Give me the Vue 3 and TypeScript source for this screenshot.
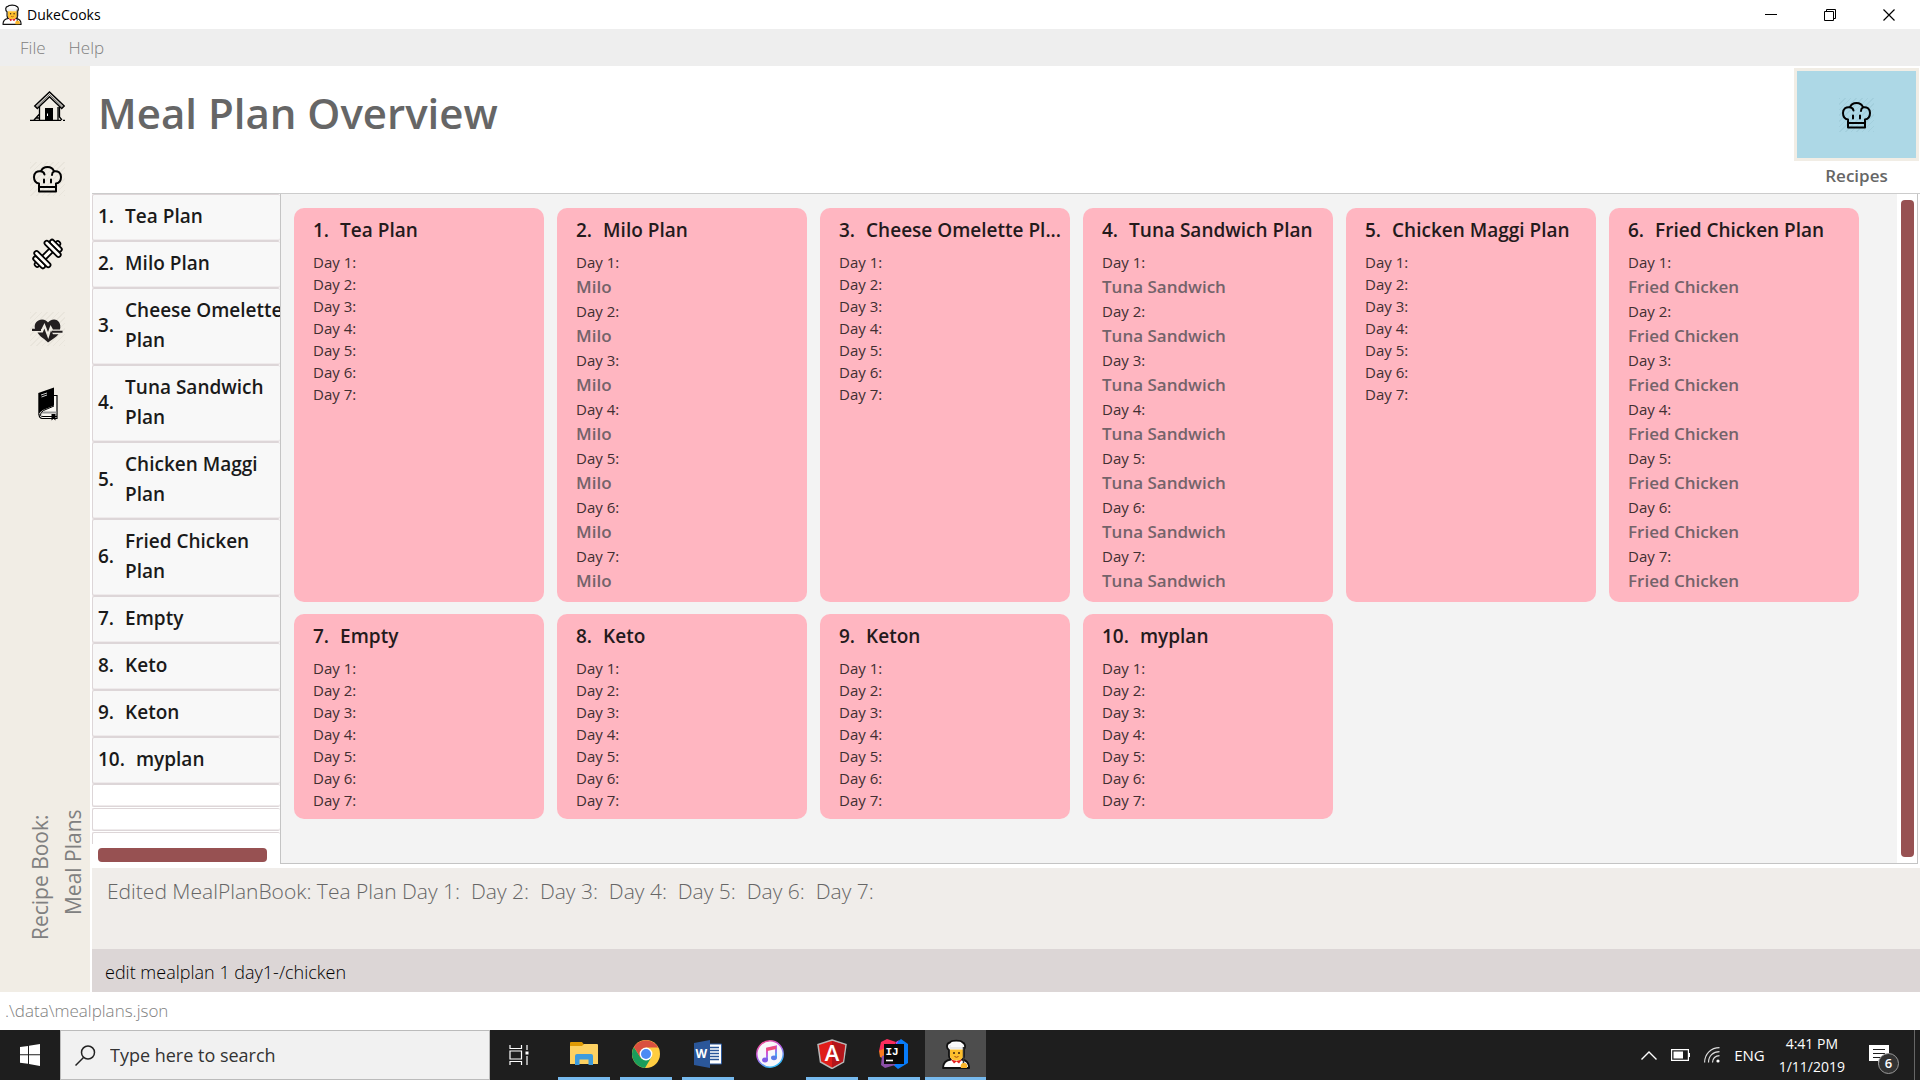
<script setup lang="ts">
import { ref } from 'vue'

interface Plan {
  id: number
  name: string
  cardName?: string
  meal?: string
}

const plans: Plan[] = [
  { id: 1, name: 'Tea Plan' },
  { id: 2, name: 'Milo Plan', meal: 'Milo' },
  { id: 3, name: 'Cheese Omelette Plan', cardName: 'Cheese Omelette Pl...' },
  { id: 4, name: 'Tuna Sandwich Plan', meal: 'Tuna Sandwich' },
  { id: 5, name: 'Chicken Maggi Plan' },
  { id: 6, name: 'Fried Chicken Plan', meal: 'Fried Chicken' },
  { id: 7, name: 'Empty' },
  { id: 8, name: 'Keto' },
  { id: 9, name: 'Keton' },
  { id: 10, name: 'myplan' },
]

const result = 'Edited MealPlanBook: Tea Plan Day 1:  Day 2:  Day 3:  Day 4:  Day 5:  Day 6:  Day 7: '
const command = ref('edit mealplan 1 day1-/chicken')
const search = ref('')
</script>

<template>
  <div class="desktop">
    <svg width="0" height="0" class="defs" aria-hidden="true">
      <symbol id="hat" viewBox="0 0 35 34">
        <g fill="none" stroke="#000" stroke-width="2" stroke-linejoin="round" stroke-linecap="round">
          <path d="M9 29.500V21.500C5.500 21 4 18 4 15C4 11 7 8.500 11 9.300C12 6.500 14.500 5 17.500 5C20.500 5 23 6.500 24 9.300C28 8.500 31 11 31 15C31 18 29.500 21 26 21.500V29.500Z" />
          <path d="M9 25H26M11 9.300C13 9.500 14 10.500 14.500 12.500M24 9.300C22.500 10 22 11 22 13M14 17.500V20.500M21 17.500V20.500" />
        </g>
      </symbol>
      <symbol id="cook" viewBox="0 0 28 30">
        <path d="M7 11C4 9 4.500 4 8 3.500C9.500 1 19 1 20.500 3.500C23 4 24 8 22 10.500V17C22 19 21 20 19.500 20.500C24 21 27 23.500 27.200 29H1C1.200 23.500 4 21 9 20.500C7.500 19.500 7 18 7 17Z" fill="#fff" stroke="#111" stroke-width="1.800" stroke-linejoin="round" />
        <path d="M8 10.500H21V17C21 20 17.500 21.500 14.500 21.500C11.500 21.500 8 20 8 17Z" fill="#fdbf2d" />
        <path d="M7.500 10V6H21.500V10Z" fill="#e9e9e9" />
        <path d="M9 5C9 3 20 3 20.500 5V8H8.500Z" fill="#fafafa" />
        <circle cx="12" cy="14" r="1" fill="#3a2412" /><circle cx="17" cy="14" r="1" fill="#3a2412" />
        <path d="M12.500 17.500Q14.500 19 16.500 17.500" stroke="#a04a10" fill="none" />
        <path d="M9 20.500L14.500 22L20 20.500L17 24.500L14.500 22.500L12 24.500Z" fill="#e5201d" />
        <path d="M21.500 8V25" stroke="#333" stroke-width="1.500" />
        <path d="M19 29C18 26 19.500 23.500 22 24C24.500 23.500 26 26 25 29Z" fill="#fbb62b" />
      </symbol>
    </svg>

    <header class="titlebar">
      <svg class="app-icon" viewBox="0 0 28 30"><use href="#cook" /></svg>
      <span class="app-name">DukeCooks</span>
      <div class="window-controls">
        <button aria-label="Minimize"><svg width="12" height="12" viewBox="0 0 12 12"><path d="M0 5.500H12" stroke="#000" /></svg></button>
        <button aria-label="Restore"><svg width="12" height="12" viewBox="0 0 12 12"><path d="M.5 2.500H9.500V11.500H.5ZM2.500 2.500V.5H11.500V9.500H9.500" fill="none" stroke="#000" /></svg></button>
        <button aria-label="Close"><svg width="12" height="12" viewBox="0 0 12 12"><path d="M.5 .5L11.500 11.500M11.500 .5L.5 11.500" stroke="#000" stroke-width="1.200" /></svg></button>
      </div>
    </header>

    <nav class="menubar">
      <button>File</button>
      <button>Help</button>
    </nav>

    <div class="body">
      <aside class="sidebar">
        <nav class="side-nav">
          <button aria-label="Home">
            <svg viewBox="0 0 35 34">
              <g fill="none" stroke="#000" stroke-width="1.300">
                <path d="M19.500 5L4.800 19L7.300 21.500L19.500 9.800L31.700 21.500L34.200 19Z" fill="#f3efe8" stroke-width="1.500" />
                <path d="M19.500 7.500L6 20.500M19.500 7.500L33 20.500" stroke-width=".6" />
                <path d="M0 33.400H31M33 33.400H35M9.500 19.500V33M29.500 19.500V30L32 33M28 20V33M4 33L9.500 27M6 31H9.500" />
              </g>
              <path d="M15 21H23V33.400H15Z" /><path d="M17.500 26.500V29" stroke="#fff" />
            </svg>
          </button>
          <button aria-label="Recipes" class="hatched"><svg viewBox="0 0 35 34"><use href="#hat" /></svg></button>
          <button aria-label="Exercises">
            <svg viewBox="0 0 35 34">
              <g transform="translate(17.500 17) rotate(-45)" fill="#fffdf8" stroke="#000" stroke-width="1.800">
                <rect x="-17" y="-2.500" width="34" height="5" rx="2" />
                <rect x="-14" y="-7.500" width="4.500" height="15" rx="2.200" />
                <rect x="9.500" y="-7.500" width="4.500" height="15" rx="2.200" />
                <rect x="-9.500" y="-10.500" width="4.500" height="21" rx="2.200" />
                <rect x="5" y="-10.500" width="4.500" height="21" rx="2.200" />
              </g>
            </svg>
          </button>
          <button aria-label="Health" class="hatched">
            <svg viewBox="0 0 35 34" fill="#231f20">
              <path d="M5 17C3.500 11 8 7.500 12 7.500C15 7.500 17 9 18 10.500C19 9 21.500 7.500 24 7.500C28.500 7.500 31.500 12 30 17.500H23L20.500 13L18 20L14.500 11L11.500 17Z" />
              <path d="M2 16.800H11V19H2ZM22 18.800H32.500V20.800H22Z" />
              <path d="M7.500 20.500H12.800L14.300 16.500L18.300 27L21 18.500L23 22.200H28.500C26 25.500 21.500 27.500 18 30.500C15 27 10.500 25.500 7.500 20.500Z" />
            </svg>
          </button>
          <button aria-label="Diary">
            <svg viewBox="0 0 35 34">
              <path d="M24 8.500H27V31.500H12Q9 31 9 27" fill="#faf8f3" stroke="#000" stroke-width="1.200" />
              <path d="M8.300 6L24 .5V18.500L13 23Q9.500 25 8.300 28Z" />
              <path d="M12.500 24.500H26.500V26.500H11.500Z" fill="#999" />
              <path d="M24 19L13.500 23.500Q10 25.500 10.500 28.500Q11 29.500 13 29.500H27" fill="none" stroke="#000" stroke-width="1" />
              <path d="M11 8L17 6M11.500 10L17 8" stroke="#fff" stroke-width=".8" />
              <path d="M21.500 27H25.500V33.500L23.500 31.800L21.500 33.500Z" />
            </svg>
          </button>
        </nav>
        <div class="mode"><span>Recipe Book:&nbsp;</span><span>Meal Plans</span></div>
      </aside>

      <main class="main">
        <section class="heading">
          <h1>Meal Plan Overview</h1>
          <div class="switcher">
            <button id="recipes-btn" aria-labelledby="recipes-label"><span class="hatched blue"><svg viewBox="0 0 35 34"><use href="#hat" /></svg></span></button>
            <label id="recipes-label" for="recipes-btn">Recipes</label>
          </div>
        </section>

        <section class="panels">
          <div class="list-pane">
            <ul class="plan-list">
              <li v-for="p in plans" :key="p.id"><span>{{ p.id }}.</span><span class="name">{{ p.name }}</span></li>
              <li v-for="n in 3" :key="'blank' + n" class="blank"></li>
            </ul>
            <div class="h-scroll"><div class="thumb"></div></div>
          </div>
          <div class="cards-pane">
            <div class="cards">
              <article v-for="p in plans" :key="p.id" class="card">
                <h2><span>{{ p.id }}.</span><span>{{ p.cardName ?? p.name }}</span></h2>
                <template v-for="d in 7" :key="d">
                  <p class="day">Day {{ d }}:</p>
                  <p v-if="p.meal" class="meal">{{ p.meal }}</p>
                </template>
              </article>
            </div>
            <div class="v-scroll"><div class="thumb"></div></div>
          </div>
        </section>

        <output class="result">{{ result }}</output>
        <input v-model="command" class="command" aria-label="Command" />
      </main>
    </div>

    <footer class="status">.\data\mealplans.json</footer>

    <div class="taskbar">
      <button class="start" aria-label="Start">
        <svg width="20" height="22" viewBox="0 0 20 22" fill="#fff"><path d="M0 3L8 2V10.300H0ZM9 1.800L20 0V10.300H9ZM0 11.300H8V19.800L0 18.800ZM9 11.300H20V22L9 20Z" /></svg>
      </button>
      <label class="search">
        <svg width="21" height="21" viewBox="0 0 21 21" fill="none" stroke="#222" stroke-width="1.500"><circle cx="13" cy="7.500" r="6.500" /><path d="M8.500 12.500L.5 20.500" /></svg>
        <input v-model="search" type="text" placeholder="Type here to search" aria-label="Search" />
      </label>
      <button class="task-view" aria-label="Task view">
        <svg width="20" height="20" viewBox="0 0 20 20" fill="none" stroke="#fff" stroke-width="1.200"><path d="M1 0V3.500H12.500V0M1 20V16.500H12.500V20M1 6H12.500V14H1ZM18 0V5M18 11V20" /><path d="M16.500 6.500H19.500V9.500H16.500Z" fill="#fff" stroke="none" /></svg>
      </button>
      <div class="apps">
        <button class="open" aria-label="File Explorer">
          <svg width="28" height="24" viewBox="0 0 28 24"><path d="M0 1Q0 0 1 0H12L14 2.500V6H0Z" fill="#df9a04" /><path d="M0 4H12L14 2H27Q28 2 28 3V22H0Z" fill="#fdd162" /><path d="M5 23V14Q5 12 7 12H21Q23 12 23 14V23H18.500V17.500H9.500V23Z" fill="#3d9bdd" /></svg>
        </button>
        <button class="open" aria-label="Chrome">
          <svg width="28" height="28" viewBox="0 0 28 28"><circle cx="14" cy="14" r="14" fill="#ffcd41" /><path d="M1.900 7A14 14 0 0 0 13 28L19.500 17L14 14L8.500 17.500Z" fill="#1a9d5b" /><path d="M26.100 7.500H14V14L8.500 17.500L1.900 7A14 14 0 0 1 26.100 7.500Z" fill="#d9503f" /><circle cx="14" cy="14" r="6.400" fill="#fff" /><circle cx="14" cy="14" r="5" fill="#4b8bf4" /></svg>
        </button>
        <button class="open" aria-label="Word">
          <svg width="28" height="28" viewBox="0 0 28 28"><path d="M14 4H27.500V24H14Z" fill="#fff" stroke="#2b579a" /><path d="M16 7.500H25M16 10.500H25M16 13.500H25M16 16.500H25M16 19.500H25" stroke="#2b579a" stroke-width="1.500" /><path d="M0 3L16 0V28L0 25Z" fill="#2b579a" /><text x="1.500" y="18" font-size="12" font-weight="700" fill="#fff">W</text></svg>
        </button>
        <button aria-label="iTunes">
          <svg width="28" height="28" viewBox="0 0 28 28"><defs><linearGradient id="itunes" x2=".5" y2="1"><stop stop-color="#fb4a7c" /><stop offset=".5" stop-color="#c05be8" /><stop offset="1" stop-color="#35b6f7" /></linearGradient></defs><circle cx="14" cy="14" r="13.200" fill="#f8f6fb" stroke="url(#itunes)" stroke-width="1.500" /><path d="M11 20V8.500L20 6.500V17.500" fill="none" stroke="url(#itunes)" stroke-width="2" /><path d="M11 9.500L20 7.500" stroke="#f04a7c" stroke-width="3" /><ellipse cx="9" cy="20" rx="3" ry="2.400" fill="#805be8" /><ellipse cx="18" cy="17.800" rx="3" ry="2.400" fill="#5b7be8" /></svg>
        </button>
        <button class="open" aria-label="Angular">
          <svg width="30" height="30" viewBox="0 0 30 30"><path d="M15 1L29 5.500L26.500 23L15 29.500L3.500 23L1 5.500Z" fill="#e01e1a" stroke="#b8b8b8" stroke-width="1.500" /><path d="M15 2V28.500L26 22.500L28 6Z" fill="#b3161b" /><text x="15" y="22" text-anchor="middle" font-size="22" font-weight="600" fill="#fff">A</text></svg>
        </button>
        <button class="open" aria-label="IntelliJ IDEA">
          <svg width="30" height="30" viewBox="0 0 30 30"><path d="M2 3L8 0L17 3L12 14L0 12Z" fill="#fc2d5c" /><path d="M0 12L6 9V20L1 18Z" fill="#f97a20" /><path d="M17 4L22 0L29 5V24L19 30L12 24L20 12Z" fill="#087cfa" /><path d="M3 17L15 14L16 26L6 29L2 26Z" fill="#8c4fa8" /><path d="M17 3L20 1L16 8Z" fill="#b74af7" /><path d="M5 5H25V25H5Z" fill="#0a0a0a" /><text x="6.500" y="16" font-size="11" font-weight="700" class="mono" fill="#fff">IJ</text><path d="M7 21.500H14" stroke="#fff" stroke-width="1.600" /></svg>
        </button>
        <button class="open active" aria-label="DukeCooks"><svg width="28" height="30" viewBox="0 0 28 30"><use href="#cook" /></svg></button>
      </div>
      <div class="tray">
        <svg width="16" height="9" viewBox="0 0 16 9"><path d="M.5 8.500L8 1L15.500 8.500" fill="none" stroke="#fff" stroke-width="1.400" /></svg>
        <svg width="19" height="12" viewBox="0 0 19 12"><path d="M.6 .6H17.400V11.400H.6Z" fill="none" stroke="#fff" stroke-width="1.200" /><path d="M2.500 2.500H12V9.500H2.500ZM18 4H19V8H18Z" fill="#fff" /></svg>
        <svg width="16" height="16" viewBox="0 0 16 16" fill="none" stroke="#ddd" stroke-width="1.200"><path d="M.6 15.500C.6 7 7 .6 15.500 .6M4.500 15.500C4.500 9 9 4.600 15.500 4.600M8.500 15.500C8.500 11.500 11.500 8.600 15.500 8.600" /><circle cx="14" cy="14" r="1.600" fill="#fff" stroke="none" /></svg>
        <span class="lang">ENG</span>
        <div class="clock"><span>4:41 PM</span><span>1/11/2019</span></div>
        <button class="notify" aria-label="Notifications">
          <svg width="20" height="20" viewBox="0 0 20 20"><path d="M0 0H20V16H13L9 20V16H0Z" fill="#fff" /><path d="M4 4.500H16M4 8.500H16M4 12.500H12" stroke="#1e1e1e" stroke-width="1.200" /></svg>
          <span class="badge">6</span>
        </button>
      </div>
    </div>
  </div>
</template>

<style>
body {
  margin: 0;
}
</style>

<style scoped>
* {
  box-sizing: border-box;
}
.desktop {
  display: flex;
  flex-direction: column;
  min-height: 100vh;
  background: #fff;
  font-family: "Open Sans", "Noto Sans", sans-serif;
  color: #1a1a1a;
}
.defs {
  display: none;
}
button {
  padding: 0;
  border: 0;
  background: none;
  color: inherit;
  font: inherit;
}
svg {
  display: block;
}
.mono {
  font-family: "Liberation Mono", monospace;
}
.titlebar {
  display: flex;
  align-items: center;
  height: 29px;
  padding-left: 2px;
  color: #000;
}
.app-icon {
  width: 20px;
  height: 21px;
}
.app-name {
  margin-left: 5px;
  font-size: 14px;
}
.window-controls {
  display: flex;
  margin-left: auto;
  margin-right: 2px;
}
.window-controls button {
  display: flex;
  align-items: center;
  justify-content: center;
  width: 59px;
  height: 29px;
}
.menubar {
  display: flex;
  gap: 23px;
  height: 37px;
  padding-left: 20px;
  background: #eee;
  color: #808080;
  font-size: 17px;
  font-weight: 300;
}
.body {
  display: flex;
  flex: 1;
}
.sidebar {
  display: flex;
  flex-direction: column;
  align-items: center;
  justify-content: space-between;
  width: 90px;
  padding: 21px 0 52px;
  background: #f1ede5;
}
.side-nav {
  display: flex;
  flex-direction: column;
  gap: 41px;
  padding-left: 5px;
}
.side-nav svg,
.switcher svg {
  width: 35px;
  height: 34px;
}
.hatched {
  background: repeating-linear-gradient(135deg, #e9e5dc 0 1px, transparent 1px 4px);
}
.hatched.blue {
  background: repeating-linear-gradient(135deg, #a3cfdd 0 1px, transparent 1px 4px);
}
.mode {
  display: flex;
  flex-direction: column;
  align-self: flex-end;
  padding-right: 20px;
  writing-mode: vertical-rl;
  transform: rotate(180deg);
  color: #808080;
  font-size: 21px;
  line-height: 33px;
  text-align: right;
}
.mode span {
  display: block;
}
.main {
  display: flex;
  flex: 1;
  flex-direction: column;
  min-width: 0;
  padding-left: 2px;
}
.heading {
  display: flex;
  justify-content: space-between;
  height: 127px;
  padding-left: 6px;
}
h1 {
  margin: 15px 0 0;
  color: #666;
  font-size: 42px;
  font-weight: 600;
  line-height: 64px;
}
.switcher {
  display: flex;
  flex-direction: column;
  align-items: center;
  padding: 2px 1px 0 0;
}
.switcher button {
  display: flex;
  align-items: center;
  justify-content: center;
  width: 125px;
  height: 93px;
  border: 3px solid #f1ede5;
  background: #add8e6;
}
.switcher label {
  color: #666;
  font-size: 17px;
  font-weight: 600;
  line-height: 30px;
}
.panels {
  display: flex;
  flex: 1;
  border-top: 1px solid #ccc;
}
.list-pane {
  display: flex;
  flex-direction: column;
  width: 188px;
  overflow: hidden;
}
.plan-list {
  flex: 1 1 0px;
  margin: 0;
  padding: 0;
  overflow: hidden;
  list-style: none;
  font-size: 19px;
  font-weight: 600;
  line-height: 30px;
}
.plan-list li {
  display: flex;
  align-items: center;
  gap: 11px;
  padding: 6px 0 9px 5px;
  border: 1px solid #ddd6d8;
  border-right: 0;
  border-radius: 2px;
  box-shadow: inset 0 -1px #efebec;
  background: #f8f8f8;
}
.plan-list .name {
  flex: none;
  width: 160px;
}
.plan-list .blank {
  height: 23px;
  padding: 0;
  margin-bottom: 1px;
  background: #fff;
}
.h-scroll {
  padding: 4px 13px 2px 6px;
}
.h-scroll .thumb {
  height: 14px;
  border-radius: 4px;
  background: #975152;
}
.cards-pane {
  display: flex;
  flex: 1;
  margin-right: 2px;
  border: 1px solid #c4c4c4;
  border-top: 0;
  background: #f3f3f3;
}
.cards {
  display: grid;
  flex: 1;
  grid-template-columns: repeat(auto-fill, 250px);
  align-content: start;
  gap: 12px 13px;
  padding: 14px 13px;
}
.card {
  padding: 9px 10px 8px 19px;
  border-radius: 10px;
  background: #ffb6c1;
  color: #412f32;
}
.card h2 {
  display: flex;
  gap: 11px;
  margin: 0 0 8px;
  color: #241a1c;
  font-size: 19px;
  font-weight: 600;
  line-height: 26px;
  white-space: nowrap;
}
.card p {
  margin: 0;
}
.day {
  font-size: 15px;
  line-height: 22px;
}
.meal {
  color: #74636a;
  font-size: 17px;
  font-weight: 600;
  line-height: 27px;
}
.v-scroll {
  display: flex;
  width: 20px;
  padding: 6px 3px 6px 4px;
  background: #fff;
}
.v-scroll .thumb {
  flex: 1;
  border-radius: 4px;
  background: #975152;
}
.result {
  height: 81px;
  margin-top: 4px;
  padding: 8px 15px;
  background: #f0edea;
  color: #666;
  font-size: 21px;
  font-weight: 300;
  line-height: 30px;
  white-space: pre;
}
.command {
  width: 100%;
  height: 43px;
  padding: 2px 13px 0;
  border: 0;
  background: #dcd6d6;
  color: #000;
  font-family: inherit;
  font-size: 18px;
  font-weight: 300;
}
.status {
  height: 38px;
  padding-left: 5px;
  color: #808080;
  font-size: 17px;
  font-weight: 300;
  line-height: 38px;
}
.taskbar {
  display: flex;
  align-items: center;
  height: 50px;
  background: #1e1e1e;
  color: #fff;
}
.start {
  display: flex;
  justify-content: center;
  width: 60px;
}
.search {
  display: flex;
  align-items: center;
  gap: 14px;
  width: 430px;
  height: 50px;
  padding-left: 14px;
  border: 1px solid #bbb;
  background: #f1f1f1;
}
.search input {
  flex: 1;
  padding: 0;
  border: 0;
  background: none;
  font-family: inherit;
  font-size: 18px;
}
.search input::placeholder {
  color: #333;
  opacity: 1;
}
.task-view {
  display: flex;
  padding-left: 19px;
  width: 63px;
}
.apps {
  display: flex;
}
.apps button {
  display: flex;
  align-items: center;
  justify-content: center;
  width: 52px;
  height: 50px;
  margin: 0 5px;
  border-bottom: 3px solid transparent;
}
.apps .open {
  border-bottom-color: #76b9ed;
}
.apps .active {
  width: 61px;
  margin: 0;
  background: #4d4d4d;
}
.tray {
  display: flex;
  align-items: center;
  gap: 14px;
  margin-left: auto;
  margin-right: 5px;
  padding-right: 25px;
  height: 50px;
  border-right: 1px solid #666;
  font-size: 15px;
}
.clock {
  display: flex;
  flex-direction: column;
  align-items: center;
  font-size: 14px;
  line-height: 23px;
}
.notify {
  position: relative;
  margin-left: 10px;
}
.badge {
  position: absolute;
  top: 8px;
  left: 9px;
  width: 21px;
  height: 21px;
  border: 1px solid #999;
  border-radius: 50%;
  background: #333;
  font-size: 13px;
  font-weight: 600;
  line-height: 19px;
}
</style>
